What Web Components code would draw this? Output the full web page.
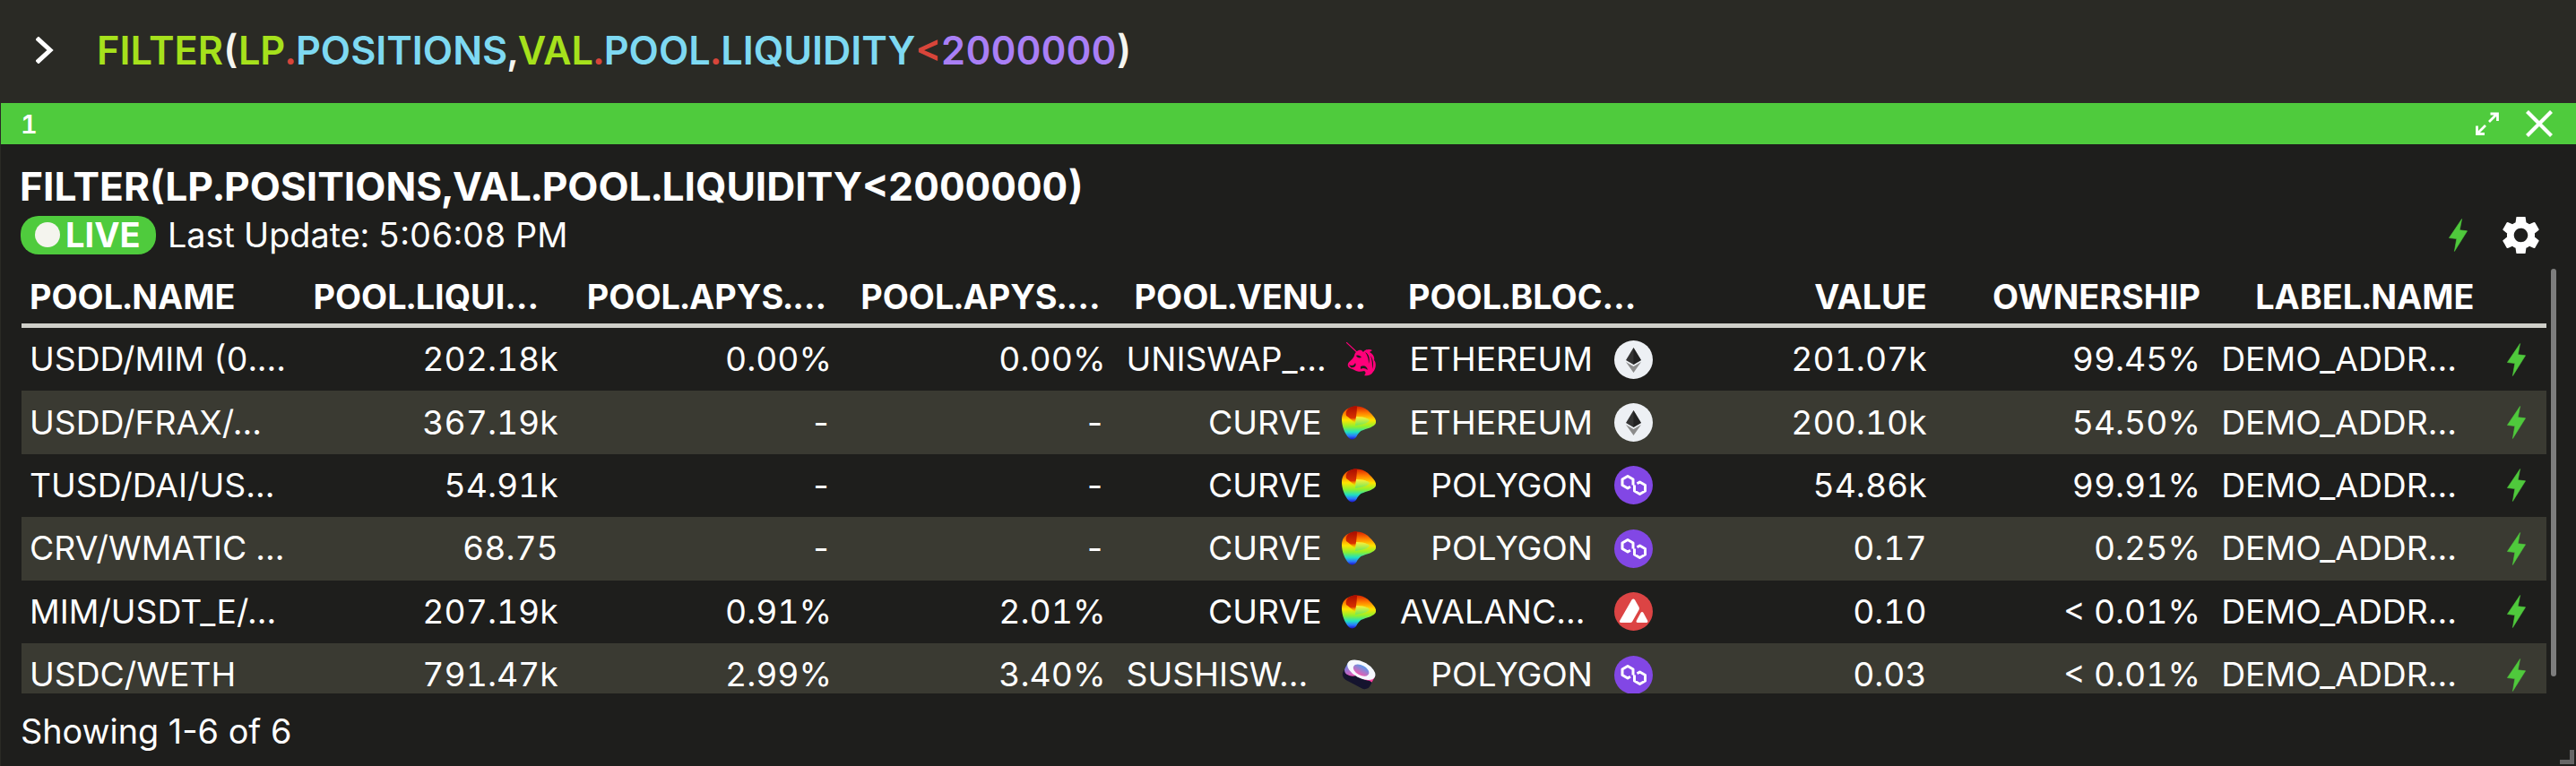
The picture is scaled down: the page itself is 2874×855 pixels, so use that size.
<!DOCTYPE html>
<html>
<head>
<meta charset="utf-8">
<style>
    html, body { margin: 0; padding: 0; background: #2a2a25; }
    body { font-family: "Inter", "Liberation Sans", sans-serif; font-variant-numeric: tabular-nums; color: #fff; height: 855px; overflow: hidden; }
</style>
</head>
<body>
<cmd-bar></cmd-bar>
<lp-window>
    <span slot="index">1</span>
    <span slot="title">FILTER(LP.POSITIONS,VAL.POOL.LIQUIDITY&lt;2000000)</span>
    <live-status slot="status" updated="5:06:08 PM"></live-status>
    <pool-table></pool-table>
    <span slot="footer">Showing 1-6 of 6</span>
</lp-window>
<script>
/* icons: shared svg strings */
const BOLT = (w, h) => `<svg width="${w}" height="${h}" viewBox="0 0 21 37"><path fill="#4fc93c" stroke="#4fc93c" stroke-width="0.6" stroke-linejoin="round" d="M14.6 .5 L.4 21.5 L8.8 22.6 L6.4 36.5 L20.6 13.8 L12.2 12.8 Z"/></svg>`;

const ICONS = {
    uniswap: `<svg width="34" height="38" viewBox="0 0 34 38" style="margin-left:6px">
        <path d="M0 0 L15 14" stroke="#ff007a" stroke-width="1.1"/>
        <path fill="#ff007a" d="M9 15 C10 10 14 8 17 9 L19 11 C21 8 26 7 29 9 L26 11 C30 13 32 17 31 20 C34 23 33 30 30 33 C28 37 23 38 20 37 C22 35 22 33 20 32 C17 33 13 33 11 32 L7 30 C3 29 1 27 2 24 C3 21 7 20 9 15Z"/>
        <path fill="#1e1e1c" d="M11 15 C13 14 16 15 17 17 C14 18 12 17 11 15Z M3 25 C6 27 9 26 10 23 C12 26 9 29 5 28Z M16 27 C20 25 23 27 24 31 C21 29 19 28 16 30Z M21 11 C25 13 27 18 25 24 C25 19 24 15 21 11Z M27 15 C30 19 31 24 29 30 C29 25 29 20 27 15Z"/>
    </svg>`,
    curve: `<svg width="38" height="38" viewBox="0 0 38 38" style="margin-left:1px">
        <defs>
            <linearGradient id="cv" x1="0" y1="0" x2="0" y2="1">
                <stop offset="0" stop-color="#d81e00"/><stop offset=".2" stop-color="#ff7a00"/>
                <stop offset=".42" stop-color="#ffe500"/><stop offset=".62" stop-color="#8cf030"/>
                <stop offset=".78" stop-color="#20e0c0"/><stop offset=".9" stop-color="#2a78ff"/>
                <stop offset="1" stop-color="#1c10c8"/>
            </linearGradient>
            <linearGradient id="cvr" x1="0" y1="0" x2="0" y2="1">
                <stop offset="0" stop-color="#a80c00"/><stop offset=".7" stop-color="#d83000"/><stop offset="1" stop-color="#ff9000" stop-opacity="0"/>
            </linearGradient>
            <linearGradient id="cvh" x1="0" y1="0" x2="0" y2="1">
                <stop offset="0" stop-color="#fff03a"/><stop offset="1" stop-color="#6ee858"/>
            </linearGradient>
        </defs>
        <path fill="url(#cv)" d="M9 2 C15 -1 25 0 31 7 C35 11 39 15 38 19 C37 23 30 25 24 27 C20 28 18 31 16 35 C14 38 10 38 8 36 C3 31 0 22 0 15 C0 9 3 4 9 2Z"/>
        <path fill="url(#cvr)" d="M9 2 C12 .5 15 0 17 .5 C17 6 16 12 15 19 C12 17 8 13 5 11 C4 7 6 3.500 9 2Z"/>
        <path fill="url(#cvh)" d="M16 12 C22 12 28 13 31 16 C30 19 24 21 15 22 Z"/>
    </svg>`,
    sushi: `<svg width="40" height="38" viewBox="0 0 40 38">
        <defs>
            <linearGradient id="su" x1="0" y1="0" x2="1" y2=".3">
                <stop offset="0" stop-color="#5a8ee8"/><stop offset=".6" stop-color="#f050b0"/><stop offset="1" stop-color="#f8409a"/>
            </linearGradient>
            <linearGradient id="sh" x1="0" y1="0" x2="0" y2="1">
                <stop offset="0" stop-color="#5a9ae8"/><stop offset="1" stop-color="#ee5cb0"/>
            </linearGradient>
        </defs>
        <g transform="rotate(28 20 19)">
            <rect x="3" y="8" width="34" height="23" rx="7" fill="#15142e"/>
            <path fill="url(#su)" d="M3 13 H37 V20 C33 18 30 22 27 21 C23 20 21 18 18 21 C15 25 10 25 8 25 C5 25 3 22 3 20Z"/>
            <ellipse cx="20" cy="13" rx="17" ry="9" fill="#f6f8ff"/>
            <ellipse cx="20" cy="13.500" rx="9.500" ry="5.500" fill="url(#sh)"/>
        </g>
    </svg>`,
    ethereum: `<svg width="43" height="43" viewBox="0 0 43 43">
        <circle cx="21.500" cy="21.500" r="21.500" fill="#edf0f4"/>
        <path fill="#343434" d="M21.500 8 L13 22 L21.500 27 L30 22Z"/>
        <path fill="#8c8c8c" d="M21.500 29 L13 24 L21.500 36 L30 24Z"/>
        <path fill="#141414" opacity=".55" d="M21.500 8 V27 L30 22Z"/>
    </svg>`,
    polygon: `<svg width="43" height="43" viewBox="0 0 43 43">
        <circle cx="21.500" cy="21.500" r="21.500" fill="#8247e5"/>
        <path fill="none" stroke="#fff" stroke-width="3" stroke-linejoin="round" d="M21 21.500 V15 L15 11.500 L9 15 V21.500 L15 25 L18 23.300 M22.500 21.500 V28 L28.500 31.500 L34.500 28 V21.500 L28.500 18 L25.500 19.700"/>
    </svg>`,
    avalanche: `<svg width="43" height="43" viewBox="0 0 43 43">
        <circle cx="21.500" cy="21.500" r="21.500" fill="#dc4444"/>
        <path fill="#fff" d="M19.500 8.500 C20.500 7 22 7 23 8.500 L27.500 16.500 C28 17.500 28 18.800 27.500 19.800 L20 33 C19.500 33.700 18.800 34 18 34 H7.500 C6 34 5.500 33 6.200 31.800Z"/>
        <path fill="#fff" d="M29.500 23 C30.300 21.700 31.700 21.700 32.500 23 L37.200 31.800 C37.800 33 37.200 34 36 34 H26 C24.700 34 24.200 33 24.800 31.800Z"/>
    </svg>`,
};

const COLS = ['POOL.NAME', 'POOL.LIQUI…', 'POOL.APYS.…', 'POOL.APYS.…', 'POOL.VENU…', 'POOL.BLOC…', 'VALUE', 'OWNERSHIP', 'LABEL.NAME'];

const ROWS = [
    ['USDD/MIM (0.…', '202.18k', '0.00%', '0.00%', 'UNISWAP_…', 'uniswap', 'ETHEREUM', 'ethereum', '201.07k', '99.45%'],
    ['USDD/FRAX/…', '367.19k', '-', '-', 'CURVE', 'curve', 'ETHEREUM', 'ethereum', '200.10k', '54.50%'],
    ['TUSD/DAI/US…', '54.91k', '-', '-', 'CURVE', 'curve', 'POLYGON', 'polygon', '54.86k', '99.91%'],
    ['CRV/WMATIC …', '68.75', '-', '-', 'CURVE', 'curve', 'POLYGON', 'polygon', '0.17', '0.25%'],
    ['MIM/USDT_E/…', '207.19k', '0.91%', '2.01%', 'CURVE', 'curve', 'AVALANC…', 'avalanche', '0.10', '&lt; 0.01%'],
    ['USDC/WETH', '791.47k', '2.99%', '3.40%', 'SUSHISW…', 'sushi', 'POLYGON', 'polygon', '0.03', '&lt; 0.01%'],
];

class CmdBar extends HTMLElement {
    constructor() {
        super();
        this.attachShadow({ mode: 'open' }).innerHTML = `
            <style>
                :host { display: flex; align-items: center; height: 115px; background: #2a2a25; box-sizing: border-box; padding: 0 0 4px 40px; }
                svg { flex: none; margin-right: 48px; }
                .code { font-size: 43.3px; font-weight: 600; white-space: pre; color: #f5f5f0; }
                .fn { color: #a6e11c; }
                .dot { color: #d8453a; }
                .prop { color: #7ed9f2; }
                .op { color: #d8453a; }
                .num { color: #a97ff6; }
            </style>
            <svg width="20" height="30" viewBox="0 0 20 30"><path d="M3 3 L16 15 L3 27" fill="none" stroke="#fff" stroke-width="5" stroke-linecap="square"/></svg>
            <span class="code"><span class="fn">FILTER</span>(<span class="fn">LP</span><span class="dot">.</span><span class="prop">POSITIONS</span>,<span class="fn">VAL</span><span class="dot">.</span><span class="prop">POOL</span><span class="dot">.</span><span class="prop">LIQUIDITY</span><span class="op">&lt;</span><span class="num">2000000</span>)</span>
        `;
    }
}

class LiveStatus extends HTMLElement {
    constructor() {
        super();
        this.attachShadow({ mode: 'open' });
    }

    connectedCallback() {
        this.shadowRoot.innerHTML = `
            <style>
                :host { display: flex; align-items: center; gap: 13px; font-size: 37.8px; }
                .pill { display: flex; align-items: center; gap: 6px; box-sizing: border-box; height: 43px; width: 151px; padding-left: 16px; border-radius: 20px; background: #4fcb3d; font-weight: 700; font-size: 38px; }
                .pill i { width: 28px; height: 28px; border-radius: 50%; background: #f4f4ee; }
            </style>
            <span class="pill"><i></i>LIVE</span>
            <span>Last Update: ${this.getAttribute('updated')}</span>
        `;
    }
}

class LpWindow extends HTMLElement {
    constructor() {
        super();
        this.attachShadow({ mode: 'open' }).innerHTML = `
            <style>
                :host { display: flex; flex-direction: column; position: relative; height: 740px; margin-left: 1px; background: #1e1e1c; }
                header { display: flex; align-items: center; height: 46px; background: #4fcb3d; padding: 0 26px 0 22px; font-size: 29px; font-weight: 600; flex: none; }
                header .grow { flex: 1; }
                header svg { display: block; }
                .head { padding: 24px 0 0 21px; height: 139px; box-sizing: border-box; flex: none; position: relative; }
                .title { font-size: 44.3px; font-weight: 700; line-height: 46px; white-space: pre; }
                .sub { display: flex; align-items: center; justify-content: space-between; margin: 8px 0 0 1px; padding-right: 41px; }
                .tools { display: flex; align-items: center; gap: 39px; }
                .tools svg { display: block; }
                .body { flex: none; margin-left: 23px; }
                footer { font-size: 37.8px; font-variant-numeric: normal; padding: 20px 0 0 22px; line-height: 44px; }
                .grip { position: absolute; right: 2px; bottom: 2px; width: 11px; height: 11px; border-right: 5px solid #666; border-bottom: 5px solid #666; }
            </style>
            <header>
                <slot name="index"></slot>
                <span class="grow"></span>
                <svg width="26" height="26" viewBox="0 0 26 26" style="margin-right:30px" fill="none" stroke="#fff" stroke-width="2.800">
                    <path d="M15 11 L24 2 M16.500 2 H24.500 V10 M11 15 L2 24 M1.500 15.500 V24.500 H10"/>
                </svg>
                <svg width="30" height="30" viewBox="0 0 30 30" fill="none" stroke="#fff" stroke-width="4.200"><path d="M1.500 1.500 L28.500 28.500 M28.500 1.500 L1.500 28.500"/></svg>
            </header>
            <div class="head">
                <div class="title"><slot name="title"></slot></div>
                <div class="sub">
                    <slot name="status"></slot>
                    <div class="tools">
                        ${BOLT(21, 37)}
                        <svg width="41" height="41" viewBox="2.500 2.500 19 19"><path fill="#fff" d="M19.140 12.940c.04-.3.060-.61.060-.94 0-.32-.02-.64-.07-.94l2.030-1.580c.18-.14.23-.41.12-.61l-1.920-3.320c-.12-.22-.37-.29-.59-.22l-2.390.96c-.5-.38-1.030-.7-1.620-.94l-.36-2.540c-.04-.24-.24-.41-.48-.41h-3.840c-.24 0-.43.17-.47.41l-.36 2.540c-.59.24-1.130.57-1.620.94l-2.390-.96c-.22-.08-.47 0-.59.22L2.740 8.870c-.12.21-.08.47.12.61l2.030 1.580c-.05.3-.09.63-.09.94s.02.64.07.94l-2.030 1.580c-.18.14-.23.41-.12.61l1.920 3.320c.12.22.37.29.59.22l2.390-.96c.5.38 1.030.7 1.620.94l.36 2.54c.05.24.24.41.48.41h3.840c.24 0 .44-.17.47-.41l.36-2.540c.59-.24 1.130-.56 1.620-.94l2.390.96c.22.08.47 0 .59-.22l1.920-3.320c.12-.22.07-.47-.12-.61l-2.010-1.580zM12 15.600c-1.980 0-3.600-1.620-3.600-3.600s1.620-3.600 3.600-3.600 3.600 1.620 3.600 3.600-1.620 3.600-3.600 3.600z"/></svg>
                    </div>
                </div>
            </div>
            <div class="body"><slot></slot></div>
            <footer><slot name="footer"></slot></footer>
            <span class="grip"></span>
        `;
    }
}

/* Tune: column widths here, everything in the table lines up from them */
const GRID = 'repeat(9, 305.4px) 1fr';

class PoolTable extends HTMLElement {
    constructor() {
        super();
        this.attachShadow({ mode: 'open' }).innerHTML = `
            <style>
                :host { display: flex; gap: 5px; height: 474px; font-size: 37.3px; }
                .clip { width: 2817px; height: 474px; overflow: hidden; flex: none; }
                .thumb { width: 6px; height: 455px; border-radius: 3px; background: #7d7d7d; }
                .hrow { display: grid; grid-template-columns: ${GRID}; height: 61px; border-bottom: 5px solid #cfcfc9; align-items: center; font-weight: 700; font-size: 37.8px; }
                .hrow span { padding: 0 12px 0 20px; white-space: pre; text-align: right; line-height: 46px; }
                .hrow span:first-child { padding-left: 9px; text-align: left; }
                .hrow span.cut { text-align: left; }
                .row { display: grid; grid-template-columns: ${GRID}; height: 70.4px; align-items: center; white-space: pre; line-height: 40px; }
                .row:nth-child(even) { background: #3a3a32; }
                .c { padding: 0 12px 0 11px; text-align: right; }
                .c.name { text-align: left; padding-left: 9px; }
                .c.cut { text-align: left; }
                .ic { display: flex; align-items: center; justify-content: space-between; padding: 0 12px 0 11px; }
                .ic b { font-weight: 400; text-align: right; flex: none; }
                .ic b.cut { text-align: left; }
                .ic svg { display: block; flex: none; }
                .ic .logo { width: 43px; display: flex; justify-content: flex-start; flex: none; }
                .bolt { display: flex; justify-content: flex-start; padding-left: 24px; }
                .bolt svg { display: block; }
            </style>
            <div class="clip">
                <div class="hrow">${COLS.map((c) => `<span${c.endsWith('…') ? ' class="cut"' : ''}>${c}</span>`).join('')}<span></span></div>
                <div class="rows">${ROWS.map(rowHtml).join('')}</div>
            </div>
            <div class="thumb"></div>
        `;
    }
}

function rowHtml(r) {
    const logoCell = (text, icon, width) => `<div class="ic"><b class="${text.endsWith('…') ? 'cut' : ''}" style="width:${width}px">${text}</b><span class="logo">${ICONS[icon]}</span></div>`;
    return `<div class="row">
        <div class="c name">${r[0]}</div>
        <div class="c">${r[1]}</div>
        <div class="c">${r[2]}</div>
        <div class="c">${r[3]}</div>
        ${logoCell(r[4], r[5], 218)}
        ${logoCell(r[6], r[7], 215)}
        <div class="c">${r[8]}</div>
        <div class="c">${r[9]}</div>
        <div class="c cut">DEMO_ADDR…</div>
        <div class="bolt">${BOLT(21, 37)}</div>
    </div>`;
}

customElements.define('cmd-bar', CmdBar);
customElements.define('live-status', LiveStatus);
customElements.define('lp-window', LpWindow);
customElements.define('pool-table', PoolTable);
</script>
</body>
</html>
